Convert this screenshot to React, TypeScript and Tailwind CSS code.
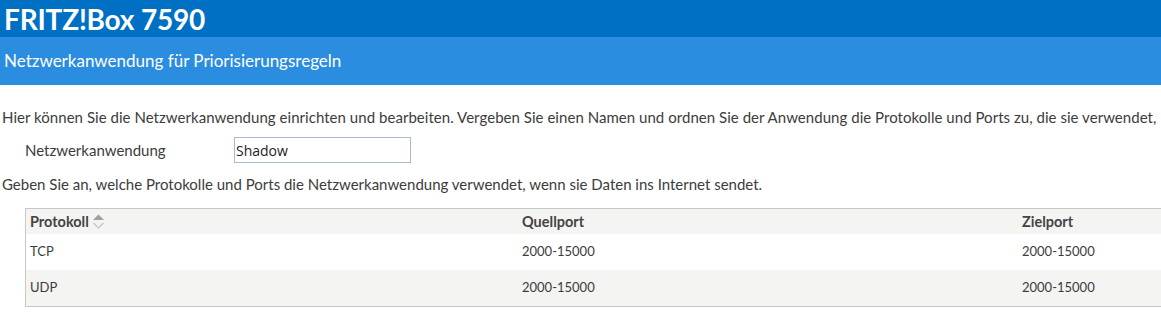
import React from 'react';

const font = { fontFamily: 'Lato, "Noto Sans", sans-serif' };

function SortIcon() {
  return (
    <svg width="13" height="17" viewBox="0 0 13 17" className="ml-[3px]">
      <path d="M1 7 L6.5 1.5 L12 7 Z" fill="#a0a0a0" />
      <path d="M1.5 10 L6.5 15 L11.5 10" fill="none" stroke="#c4c4c4" strokeWidth="1.2" />
    </svg>
  );
}

export default function App() {
  const rows = [
    { proto: 'TCP', src: '2000-15000', dst: '2000-15000' },
    { proto: 'UDP', src: '2000-15000', dst: '2000-15000' },
  ];

  return (
    <div className="w-[1161px] h-[330px] overflow-hidden bg-white text-[#3c3c3c]" style={font}>
      {/* Header */}
      <div className="h-[37px] bg-[#0070c4] flex items-center px-[4px]">
        <span className="text-white font-bold text-[28px] leading-none tracking-[-0.2px]">FRITZ!Box 7590</span>
      </div>
      <div className="h-[48px] bg-[#2a8de0] flex items-center px-[4px]">
        <span className="text-white text-[17px]">Netzwerkanwendung für Priorisierungsregeln</span>
      </div>

      {/* Content */}
      <div className="pt-[23px] text-[15px]">
        <p className="pl-[2px] whitespace-nowrap leading-[18px] tracking-[0.04px]">
          Hier können Sie die Netzwerkanwendung einrichten und bearbeiten. Vergeben Sie einen Namen und ordnen Sie der Anwendung die Protokolle und Ports zu, die sie verwendet,
        </p>
        <div className="flex items-center mt-[11px] h-[26px]">
          <label className="pl-[25px] w-[234px]">Netzwerkanwendung</label>
          <input
            readOnly
            value="Shadow"
            className="w-[177px] h-[26px] border border-[#a9bccb] px-[1px] text-[14px] text-[#222] outline-none"
            style={{ fontFamily: '"Open Sans", sans-serif' }}
          />
        </div>
        <p className="pl-[2px] mt-[12px] leading-[18px] whitespace-nowrap">
          Geben Sie an, welche Protokolle und Ports die Netzwerkanwendung verwendet, wenn sie Daten ins Internet sendet.
        </p>

        {/* Table */}
        <div className="ml-[25px] mt-[15px] w-[1150px] border-t border-b border-l border-[#c8c8c6]">
          <div className="h-[25px] bg-[#f4f4f2] flex items-center font-bold text-[14.5px] text-[#444]">
            <div className="w-[492px] pl-[4px] flex items-center">
              Protokoll
              <SortIcon />
            </div>
            <div className="w-[500px] pl-[4px]">Quellport</div>
            <div className="pl-[4px]">Zielport</div>
          </div>
          {rows.map((r, i) => (
            <div
              key={r.proto}
              className={`h-[36px] flex items-center text-[13px] ${i % 2 === 1 ? 'bg-[#f4f4f2]' : 'bg-white'}`}
            >
              <div className="w-[492px] pl-[4px]">{r.proto}</div>
              <div className="w-[500px] pl-[4px]">{r.src}</div>
              <div className="pl-[4px]">{r.dst}</div>
            </div>
          ))}
        </div>
      </div>
    </div>
  );
}
